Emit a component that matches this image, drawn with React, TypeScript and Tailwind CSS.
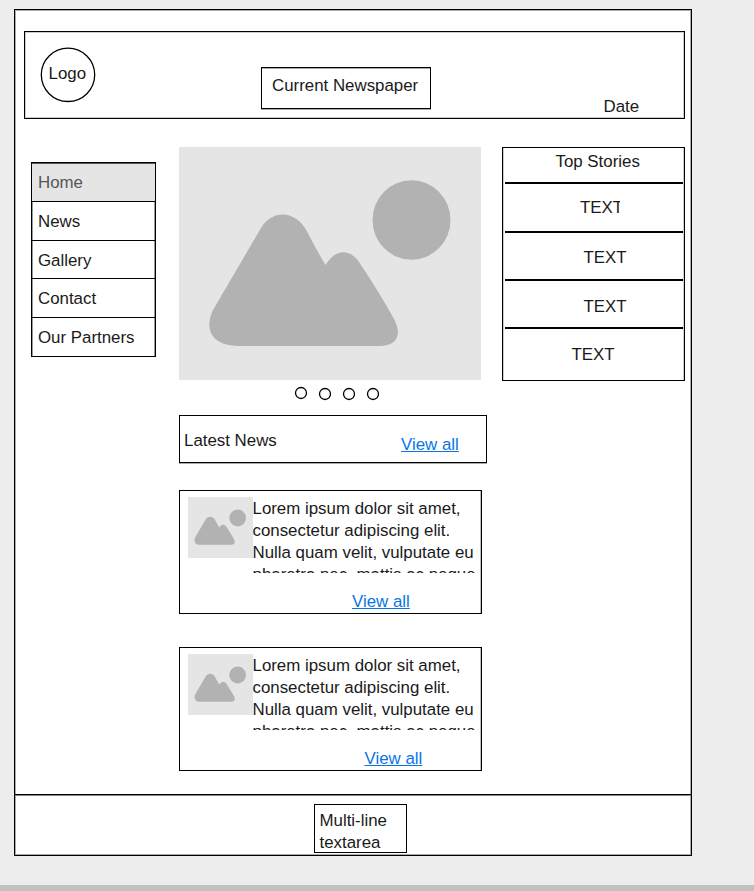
import React from 'react';

function Placeholder({ className }: { className: string }) {
  return (
    <svg viewBox="0 0 302 233" className={`bg-[#e5e5e5] ${className}`}>
      <ellipse cx="232.500" cy="73" rx="39" ry="39.700" fill="#b2b2b2" />
      <path
        d="M82 81 C93 63 114 63 126 81 C133 93 139 106 146.500 118 C157 101 172 101 182 118 C194 136 205 154 215 172 C224 189 217 199 200 199 L60 199 C35 199 24 185 34 163 Z"
        fill="#b2b2b2"
      />
    </svg>
  );
}

function ViewAll({ className }: { className: string }) {
  return (
    <a href="#" className={`block w-max text-[#0b74e5] underline decoration-1 underline-offset-1 ${className}`}>
      View all
    </a>
  );
}

function Story({ className, linkClass }: { className: string; linkClass: string }) {
  return (
    <article className={`w-[303px] border border-black shadow-[inset_-1px_0_0_#bbb] ${className}`}>
      <div className="flex pt-[6px] pl-2">
        <Placeholder className="h-[60.500px] w-[64.500px] shrink-0" />
        <p className="h-[76px] w-[224px] overflow-hidden pt-px whitespace-nowrap">
          Lorem ipsum dolor sit amet,
          <br />
          consectetur adipiscing elit.
          <br />
          Nulla quam velit, vulputate eu
          <br />
          pharetra nec, mattis ac neque.
        </p>
      </div>
      <ViewAll className={linkClass} />
    </article>
  );
}

function Dot({ className = '' }: { className?: string }) {
  return (
    <svg viewBox="0 0 14 14" className={`h-3.5 w-3.5 ${className}`}>
      <circle cx="7" cy="7" r="5.500" fill="white" stroke="black" strokeWidth="1.3" />
    </svg>
  );
}

export default function App() {
  return (
    <div className="flex h-[891px] w-[754px] flex-col overflow-hidden bg-[#ededed] pt-[9px] font-['Liberation_Sans',Arial,sans-serif] text-[16.880px] leading-[22px] text-[#1a1a1a]">
      <main className="ml-[14px] flex h-[847px] w-[678px] shrink-0 flex-col border border-black bg-white shadow-[inset_0_0_0_1px_#aaa]">
        <header className="mt-[21px] ml-[9px] flex h-[88px] w-[661px] shrink-0 items-start border border-black shadow-[inset_0_0_0_1px_#ccc]">
          <div className="relative mt-[15px] ml-[15px] h-[56px] w-[56px] pt-[16px] pl-[8.500px]">
            <svg viewBox="0 0 56 56" className="absolute inset-0 h-full w-full">
              <circle cx="28" cy="27.800" r="26.700" fill="none" stroke="black" strokeWidth="1.3" />
            </svg>
            <span className="relative">Logo</span>
          </div>
          <h1 className="mt-[35px] ml-[165px] h-[42px] w-[170px] border border-black pt-[7px] pl-[10px] whitespace-nowrap shadow-[0_1px_0_#aaa,inset_0_1px_0_#aaa]">
            Current Newspaper
          </h1>
          <span className="mt-[64px] ml-[172.500px]">Date</span>
        </header>

        <div className="flex h-[675px] shrink-0 items-start pt-7">
          <nav className="mt-[15px] ml-[16px] w-[125px] border border-black shadow-[inset_1px_0_0_#999,inset_-1px_0_0_#999]">
            <div className="h-[38px] bg-[#e5e5e5] pt-[9px] pl-[6px] text-[#555] shadow-[inset_0_1px_0_#555]">Home</div>
            <div className="h-[39px] border-t border-black pt-[9px] pl-[6px]">News</div>
            <div className="h-[38px] border-t border-black pt-[9px] pl-[6px]">Gallery</div>
            <div className="h-[39px] border-t border-black pt-[9px] pl-[6px]">Contact</div>
            <div className="h-[39px] border-t border-black pt-[9px] pl-[6px]">Our Partners</div>
          </nav>

          <div className="ml-[23px] w-[308px]">
            <Placeholder className="h-[233px] w-[302px]" />
            <div className="flex h-[35px] gap-[10.200px] pt-[6px] pl-[114.600px]">
              <Dot />
              <Dot className="mt-px" />
              <Dot className="mt-px" />
              <Dot className="mt-px" />
            </div>
            <section className="flex h-12 items-start border border-black pl-1 shadow-[0_1px_0_#aaa]">
              <h2 className="mt-[14px] w-[217px]">Latest News</h2>
              <ViewAll className="mt-[18px]" />
            </section>
            <Story className="mt-[27px] h-[124px]" linkClass="mt-[18px] ml-[172px]" />
            <Story className="mt-[33px] h-[124px]" linkClass="mt-[18px] ml-[184.500px]" />
          </div>

          <aside className="ml-[15px] h-[234px] w-[183px] border border-black pr-px pl-0.5 shadow-[inset_1px_0_0_#ccc,inset_-1px_0_0_#ccc]">
            <h2 className="h-[34px] pt-[3px] pl-[50.500px]">Top Stories</h2>
            <div className="h-[49px] border-t-2 border-black pt-[13px] pl-[75px]">
              <div className="w-10 overflow-hidden">TEXT</div>
            </div>
            <div className="h-[48px] border-t-2 border-black pt-[14px] pl-[78.500px]">TEXT</div>
            <div className="h-[48px] border-t-2 border-black pt-[15px] pl-[78.500px]">TEXT</div>
            <div className="border-t-2 border-black pt-[15px] pl-[66.500px]">TEXT</div>
          </aside>
        </div>

        <footer className="flex h-[61px] shrink-0 items-start border-t border-black pt-[9px] pl-[299px] shadow-[inset_0_1px_0_#888]">
          <div className="h-[49px] w-[93px] border border-black pt-[5px] pl-[4.500px]">
            Multi-line
            <br />
            textarea
          </div>
        </footer>
      </main>
      <div className="mt-auto h-[6px] shrink-0 bg-[#c1c1c1]" />
    </div>
  );
}
